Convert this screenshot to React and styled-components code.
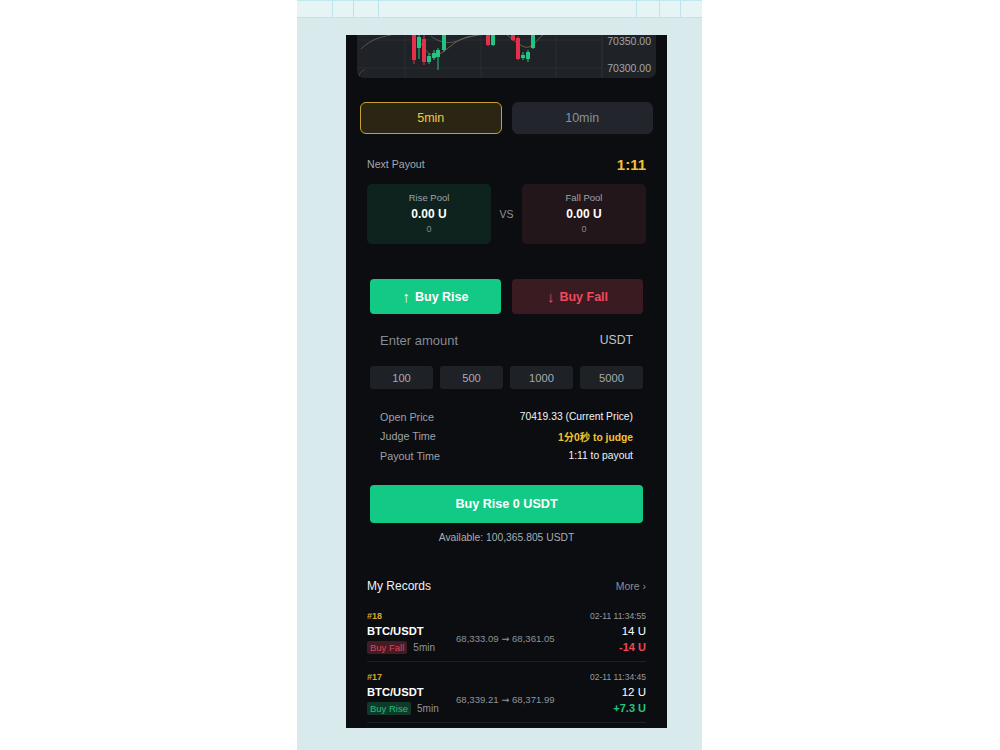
import styled, { createGlobalStyle } from 'styled-components'

const Global = createGlobalStyle`
  html, body {
    margin: 0;
    padding: 0;
    background: #ffffff;
    font-family: "Liberation Sans", Arial, "Noto Sans CJK SC", sans-serif;
  }
`

const Page = styled.div`
  width: 405px;
  height: 750px;
  margin-left: 297px;
  background: #d9eaec;
  display: flex;
  flex-direction: column;
  overflow: hidden;
`
const TopBar = styled.div`
  height: 16px;
  display: flex;
  background: #e6f4f5;
  border-top: 1px solid #c2e9ee;
  border-bottom: 1px solid #b9e5eb;
`
const BarCell = styled.div`
  width: ${(p) => (p.$w ? p.$w + 'px' : 'auto')};
  flex: ${(p) => (p.$w ? 'none' : '1')};
  border-right: ${(p) => (p.$line ? '1px solid #b9e5eb' : 'none')};
`
const Phone = styled.div`
  margin: 17px 0 0 49px;
  width: 321px;
  height: 693px;
  background: #0b0d10;
  display: flex;
  flex-direction: column;
  overflow: hidden;
`
const ChartWrap = styled.div`
  padding: 0 11px;
`
const Chart = styled.div`
  height: 43px;
  background: #1f2227;
  border-radius: 0 0 7px 7px;
  position: relative;
  overflow: hidden;
`
const Axis = styled.div`
  position: absolute;
  right: 5px;
  top: 0;
  bottom: 0;
  display: flex;
  flex-direction: column;
  justify-content: space-between;
  padding: 0 0 4px;
  font-size: 10.5px;
  color: #a2a6ad;
  line-height: 12px;
`
const Tabs = styled.div`
  display: grid;
  grid-template-columns: 1fr 1fr;
  gap: 10px;
  padding: 0 14px;
  margin-top: 24px;
`
const Tab = styled.div`
  height: 32px;
  box-sizing: border-box;
  border-radius: 6px;
  display: flex;
  align-items: center;
  justify-content: center;
  font-size: 12.5px;
  color: ${(p) => (p.$active ? '#f0c63c' : '#8b9098')};
  background: ${(p) => (p.$active ? '#2a2613' : '#22252b')};
  border: 1px solid ${(p) => (p.$active ? '#c6a234' : '#22252b')};
`
const Section = styled.div`
  padding: 0 21px;
`
const PayoutHead = styled.div`
  display: flex;
  justify-content: space-between;
  align-items: center;
  margin-top: 20px;
  height: 20px;
`
const Muted = styled.span`
  font-size: 10.6px;
  color: #a3a7ae;
`
const Countdown = styled.span`
  font-size: 15px;
  font-weight: 700;
  color: #f2c230;
`
const Pools = styled.div`
  display: grid;
  grid-template-columns: 124px 1fr 124px;
  margin-top: 10px;
`
const Pool = styled.div`
  height: 60px;
  border-radius: 5px;
  background: ${(p) => (p.$rise ? '#0e231d' : '#23161a')};
  display: flex;
  flex-direction: column;
  align-items: center;
  padding-top: 8px;
  box-sizing: border-box;
`
const PoolLabel = styled.div`
  font-size: 9.5px;
  color: #9ea2a9;
  line-height: 12px;
`
const PoolValue = styled.div`
  font-size: 12px;
  font-weight: 700;
  color: #ffffff;
  line-height: 16px;
  margin-top: 2px;
`
const PoolCount = styled.div`
  font-size: 9px;
  color: #868b92;
  line-height: 12px;
  margin-top: 1px;
`
const Vs = styled.div`
  display: flex;
  align-items: center;
  justify-content: center;
  font-size: 10.5px;
  color: #8e939a;
`
const Trade = styled.div`
  padding: 0 24px;
  margin-top: 35px;
`
const Sides = styled.div`
  display: grid;
  grid-template-columns: 1fr 1fr;
  gap: 11px;
`
const SideButton = styled.div`
  height: 35px;
  border-radius: 4px;
  display: flex;
  align-items: center;
  justify-content: center;
  gap: 5px;
  font-size: 12.5px;
  font-weight: 700;
  background: ${(p) => (p.$rise ? '#12c985' : '#3a1b21')};
  color: ${(p) => (p.$rise ? '#ffffff' : '#ef4a5d')};
`
const Arrow = styled.span`
  font-size: 15px;
  font-weight: 400;
`
const AmountRow = styled.div`
  height: 52px;
  display: flex;
  align-items: center;
  justify-content: space-between;
  padding: 0 10px;
`
const AmountHint = styled.span`
  font-size: 13px;
  color: #868b92;
`
const Unit = styled.span`
  font-size: 12.2px;
  color: #c2c5ca;
`
const Quick = styled.div`
  display: grid;
  grid-template-columns: repeat(4, 1fr);
  gap: 7px;
`
const QuickButton = styled.div`
  height: 23px;
  border-radius: 3px;
  background: #1e2126;
  display: flex;
  align-items: center;
  justify-content: center;
  font-size: 11.2px;
  color: #a6aab0;
`
const Info = styled.div`
  margin-top: 18px;
  padding: 0 10px;
  display: flex;
  flex-direction: column;
`
const InfoRow = styled.div`
  height: 19.5px;
  display: flex;
  justify-content: space-between;
  align-items: center;
`
const InfoLabel = styled.span`
  font-size: 10.8px;
  color: #9da1a8;
`
const InfoValue = styled.span`
  font-size: 10.3px;
  color: ${(p) => (p.$gold ? '#f2c230' : '#f2f3f5')};
  font-weight: ${(p) => (p.$gold ? 700 : 400)};
`
const Submit = styled.div`
  margin-top: 19px;
  height: 38px;
  border-radius: 4px;
  background: #12c985;
  display: flex;
  align-items: center;
  justify-content: center;
  font-size: 12.6px;
  font-weight: 700;
  color: #ffffff;
`
const Available = styled.div`
  margin-top: 9px;
  text-align: center;
  font-size: 10.3px;
  color: #a9adb3;
`
const RecordsHead = styled.div`
  margin: 33px 0 5px;
  display: flex;
  justify-content: space-between;
  align-items: center;
  height: 20px;
`
const RecordsTitle = styled.span`
  font-size: 12px;
  color: #f0f1f3;
`
const More = styled.span`
  font-size: 10.5px;
  color: #8a8f96;
`
const Record = styled.div`
  display: grid;
  grid-template-columns: 89px 1fr auto;
  grid-template-rows: 14px 17px 15px;
  align-items: center;
  padding: 8px 0 6px;
  border-bottom: 1px solid #1c1f24;
`
const RecordId = styled.div`
  grid-column: 1 / 3;
  font-size: 9px;
  font-weight: 700;
  color: #d6a82f;
`
const RecordTime = styled.div`
  font-size: 8.5px;
  color: #979ba2;
  text-align: right;
`
const Pair = styled.div`
  font-size: 11.2px;
  font-weight: 700;
  color: #ffffff;
`
const Prices = styled.div`
  grid-row: 2 / 4;
  grid-column: 2;
  font-size: 9.6px;
  color: #8e939a;
`
const PriceArrow = styled.span`
  font-family: "DejaVu Sans", sans-serif;
  font-size: 9.5px;
`
const Stake = styled.div`
  font-size: 11.5px;
  color: #ffffff;
  text-align: right;
`
const Tags = styled.div`
  display: flex;
  align-items: center;
  gap: 6px;
  font-size: 10px;
  color: #8e939a;
`
const Tag = styled.span`
  padding: 1px 3px;
  border-radius: 2px;
  font-size: 9.5px;
  background: ${(p) => (p.$rise ? '#0f3a29' : '#451c25')};
  color: ${(p) => (p.$rise ? '#20c07e' : '#d9475b')};
`
const Profit = styled.div`
  grid-column: 3;
  font-size: 11px;
  font-weight: 700;
  text-align: right;
  color: ${(p) => (p.$up ? '#22c883' : '#f0475b')};
`

const candles = [
  { x: 57, y1: 0, y2: 25, w1: -2, w2: 29, up: false },
  { x: 62, y1: 2, y2: 13, w1: -2, w2: 24, up: true },
  { x: 67, y1: 4, y2: 27, w1: 0, w2: 30, up: false },
  { x: 72, y1: 21, y2: 27, w1: 18, w2: 29, up: true },
  { x: 77, y1: 18, y2: 23, w1: 15, w2: 25, up: true },
  { x: 81, y1: 15, y2: 22, w1: 13, w2: 35, up: true },
  { x: 87, y1: -2, y2: 15, w1: -4, w2: 17, up: true },
  { x: 131, y1: -2, y2: 10, w1: -4, w2: 11, up: false },
  { x: 136, y1: -2, y2: 10, w1: -4, w2: 11, up: true },
  { x: 156, y1: -2, y2: 5, w1: -4, w2: 6, up: false },
  { x: 161, y1: 3, y2: 24, w1: 1, w2: 25, up: false },
  { x: 166, y1: 20, y2: 23, w1: 17, w2: 25, up: true },
  { x: 171, y1: 17, y2: 24, w1: 15, w2: 27, up: true },
  { x: 176, y1: -2, y2: 13, w1: -4, w2: 14, up: true },
]

function CandleChart() {
  return (
    <svg width="299" height="43" viewBox="0 0 299 43" style={{ position: 'absolute', left: 0, top: 0 }}>
      {[48, 124, 199].map((x) => (
        <line key={x} x1={x} y1="0" x2={x} y2="43" stroke="#2b2f35" strokeWidth="1" />
      ))}
      <line x1="245" y1="0" x2="245" y2="43" stroke="#30343a" strokeWidth="1" />
      <line x1="0" y1="5" x2="245" y2="5" stroke="#2a2e34" strokeWidth="1" />
      <line x1="0" y1="33" x2="245" y2="33" stroke="#2a2e34" strokeWidth="1" />
      <path d="M4 14 C 14 4, 24 2, 34 0" fill="none" stroke="#5f646c" strokeWidth="0.8" />
      <path d="M62 6 C 68 14, 72 22, 80 20 S 96 6, 110 2 L 130 -2" fill="none" stroke="#8a6a3c" strokeWidth="0.8" />
      <path d="M74 1 C 80 6, 90 10, 100 6 S 120 0, 130 -1" fill="none" stroke="#5f646c" strokeWidth="0.8" />
      <path d="M150 0 C 158 6, 166 14, 172 12 S 180 4, 186 0" fill="none" stroke="#8a6a3c" strokeWidth="0.8" />
      <path d="M2 43 C 2 38, 4 36, 8 35" fill="none" stroke="#4a4e55" strokeWidth="0.8" />
      {candles.map((c, i) => (
        <g key={i} fill={c.up ? '#26c281' : '#e5304b'} stroke={c.up ? '#26c281' : '#e5304b'}>
          <line x1={c.x} y1={c.w1} x2={c.x} y2={c.w2} strokeWidth="1" />
          <rect x={c.x - 2} y={c.y1} width="4" height={c.y2 - c.y1} strokeWidth="0" />
        </g>
      ))}
    </svg>
  )
}

const records = [
  { id: 18, time: '02-11 11:34:55', side: 'Buy Fall', rise: false, open: '68,333.09', close: '68,361.05', stake: '14 U', profit: '-14 U' },
  { id: 17, time: '02-11 11:34:45', side: 'Buy Rise', rise: true, open: '68,339.21', close: '68,371.99', stake: '12 U', profit: '+7.3 U' },
]

export default function App() {
  return (
    <>
      <Global />
      <Page>
        <TopBar>
          <BarCell $w={35} $line />
          <BarCell $w={20} $line />
          <BarCell $w={24} $line />
          <BarCell $line />
          <BarCell $w={22} $line />
          <BarCell $w={20} $line />
          <BarCell $w={21} />
        </TopBar>
        <Phone>
          <ChartWrap>
            <Chart>
              <CandleChart />
              <Axis>
                <span>70350.00</span>
                <span>70300.00</span>
              </Axis>
            </Chart>
          </ChartWrap>

          <Tabs>
            <Tab $active>5min</Tab>
            <Tab>10min</Tab>
          </Tabs>

          <Section>
            <PayoutHead>
              <Muted>Next Payout</Muted>
              <Countdown>1:11</Countdown>
            </PayoutHead>
            <Pools>
              <Pool $rise>
                <PoolLabel>Rise Pool</PoolLabel>
                <PoolValue>0.00 U</PoolValue>
                <PoolCount>0</PoolCount>
              </Pool>
              <Vs>VS</Vs>
              <Pool>
                <PoolLabel>Fall Pool</PoolLabel>
                <PoolValue>0.00 U</PoolValue>
                <PoolCount>0</PoolCount>
              </Pool>
            </Pools>
          </Section>

          <Trade>
            <Sides>
              <SideButton $rise><Arrow>↑</Arrow>Buy Rise</SideButton>
              <SideButton><Arrow>↓</Arrow>Buy Fall</SideButton>
            </Sides>
            <AmountRow>
              <AmountHint>Enter amount</AmountHint>
              <Unit>USDT</Unit>
            </AmountRow>
            <Quick>
              {['100', '500', '1000', '5000'].map((v) => (
                <QuickButton key={v}>{v}</QuickButton>
              ))}
            </Quick>
            <Info>
              <InfoRow>
                <InfoLabel>Open Price</InfoLabel>
                <InfoValue>70419.33 (Current Price)</InfoValue>
              </InfoRow>
              <InfoRow>
                <InfoLabel>Judge Time</InfoLabel>
                <InfoValue $gold>1分0秒 to judge</InfoValue>
              </InfoRow>
              <InfoRow>
                <InfoLabel>Payout Time</InfoLabel>
                <InfoValue>1:11 to payout</InfoValue>
              </InfoRow>
            </Info>
            <Submit>Buy Rise 0 USDT</Submit>
            <Available>Available: 100,365.805 USDT</Available>
          </Trade>

          <Section>
            <RecordsHead>
              <RecordsTitle>My Records</RecordsTitle>
              <More>More ›</More>
            </RecordsHead>
            {records.map((r) => (
              <Record key={r.id}>
                <RecordId>#{r.id}</RecordId>
                <RecordTime>{r.time}</RecordTime>
                <Pair>BTC/USDT</Pair>
                <Prices>{r.open} <PriceArrow>→</PriceArrow> {r.close}</Prices>
                <Stake>{r.stake}</Stake>
                <Tags>
                  <Tag $rise={r.rise}>{r.side}</Tag>
                  5min
                </Tags>
                <Profit $up={r.rise}>{r.profit}</Profit>
              </Record>
            ))}
          </Section>
        </Phone>
      </Page>
    </>
  )
}
